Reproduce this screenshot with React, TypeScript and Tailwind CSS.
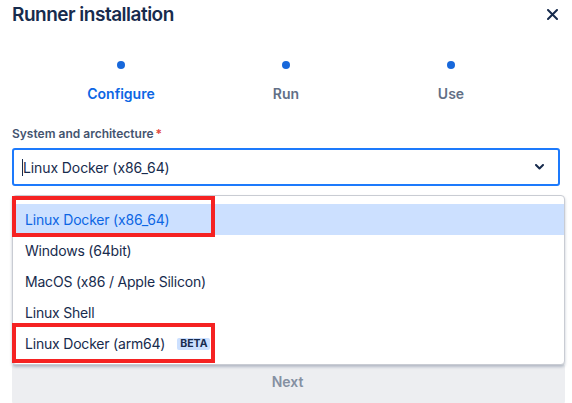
import React from "react";

export default function App() {
  const items = [
    "Linux Docker (x86_64)",
    "Windows (64bit)",
    "MacOS (x86 / Apple Silicon)",
    "Linux Shell",
  ];
  return (
    <div
      className="relative w-[572px] h-[403px] overflow-hidden bg-white text-[#172B4D]"
      style={{ fontFamily: "Inter, 'Noto Sans', sans-serif" }}
    >
      {/* Header */}
      <div className="flex items-center justify-between pl-[12px] pr-[14px] h-[30px]">
        <h1 className="text-[19px] font-semibold tracking-[-0.5px] text-[#172B4D]">Runner installation</h1>
        <svg width="11" height="11" viewBox="0 0 11 11" className="mt-[-2px]">
          <path d="M1 1 L10 10 M10 1 L1 10" stroke="#172B4D" strokeWidth="2" strokeLinecap="round" />
        </svg>
      </div>

      {/* Steps */}
      <div className="flex justify-center mt-[31px]">
        {[
          { t: "Configure", active: true },
          { t: "Run", active: false },
          { t: "Use", active: false },
        ].map((s) => (
          <div key={s.t} className="w-[165px] flex flex-col items-center">
            <div className="w-[8px] h-[8px] rounded-full bg-[#1868DB]" />
            <div
              className={
                "mt-[16px] text-[14px] font-semibold leading-[18px] " +
                (s.active ? "text-[#0C66E4]" : "text-[#626F86]")
              }
            >
              {s.t}
            </div>
          </div>
        ))}
      </div>

      {/* Field */}
      <div className="px-[12px] mt-[23px]">
        <div className="text-[12px] font-semibold text-[#44546F] leading-[16px] flex">
          System and architecture<span className="text-[#E2483D] ml-[2px]">*</span>
        </div>
        <div className="mt-[6px] h-[38px] border-2 border-[#1D7AFC] rounded-[3px] flex items-center pl-[8px] pr-[14px]">
          <div className="w-[1px] h-[17px] bg-[#172B4D]" />
          <span className="text-[14px] tracking-[-0.1px] text-[#172B4D] flex-1">Linux Docker (x86_64)</span>
          <svg width="9" height="6" viewBox="0 0 9 6">
            <path d="M1 1 L4.5 4.5 L8 1" stroke="#172B4D" strokeWidth="2" fill="none" strokeLinecap="round" strokeLinejoin="round" />
          </svg>
        </div>

        {/* Next button (behind menu) */}
        <div className="mt-[178px] w-[553px] h-[40px] bg-[#EDEEF1] rounded-[3px] flex justify-center pt-[7px]">
          <span className="text-[14px] font-semibold text-[#8590A2] ml-[-2px]">Next</span>
        </div>
      </div>

      {/* Dropdown menu */}
      <div className="absolute left-[12px] top-[195px] w-[553px] h-[170px] bg-white rounded-[4px] border border-[#C9CCD3] shadow-[0_2px_3px_rgba(9,30,66,0.25)] pt-[8px]">
        {items.map((it, i) => (
          <div
            key={it}
            className={
              "h-[31px] flex items-center pl-[12px] text-[14px] tracking-[-0.2px] " +
              (i === 0 ? "bg-[#CCE0FF] text-[#0C66E4]" : "text-[#172B4D]")
            }
          >
            {it}
          </div>
        ))}
        <div className="h-[31px] flex items-center pl-[12px] text-[14px] tracking-[-0.2px] text-[#172B4D]">
          Linux Docker (arm64)
          <span className="ml-[12px] px-[3px] h-[12px] flex items-center rounded-[2px] bg-[#CCE0FF] text-[10.5px] font-bold text-[#172B4D] tracking-normal">
            BETA
          </span>
        </div>
      </div>

      {/* Red highlight boxes */}
      <div className="absolute left-[12px] top-[196px] w-[203px] h-[41px] border-4 border-[#F52222]" />
      <div className="absolute left-[12px] top-[323px] w-[203px] h-[40px] border-4 border-[#F52222]" />
    </div>
  );
}
